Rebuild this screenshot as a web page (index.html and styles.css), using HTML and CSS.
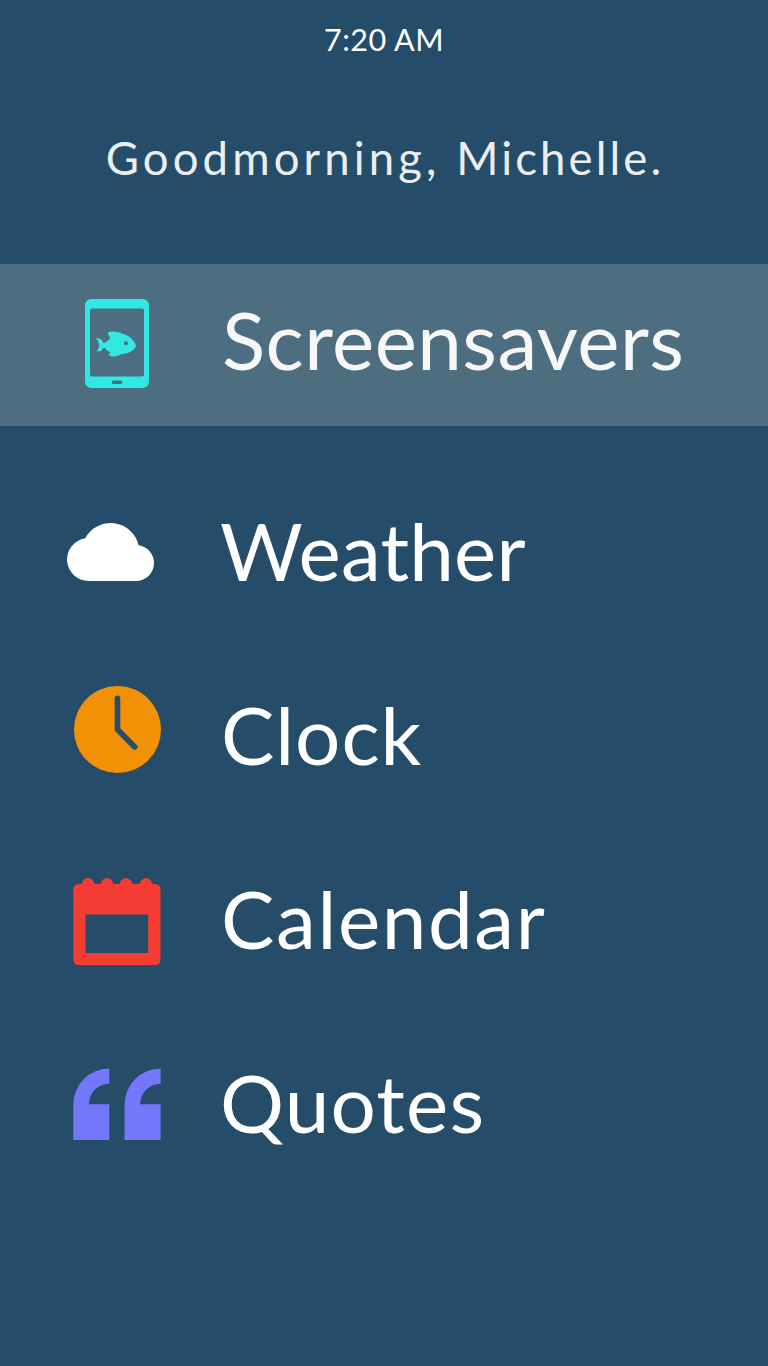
FILE: index.html
```html
<!DOCTYPE html>
<html lang="en">
<head>
<meta charset="utf-8">
<title>Home</title>
<link rel="stylesheet" href="styles.css">
</head>
<body>
<header class="header">
  <div class="time">7:20 AM</div>
  <h1 class="greeting">Goodmorning, <span class="name">Michelle.</span></h1>
</header>
<nav class="menu">
  <a class="item item-active">
    <svg class="icon icon-tablet" width="64" height="89" viewBox="0 0 64 89">
      <path fill="#31e8e3" fill-rule="evenodd" d="M7 0H57Q64 0 64 7V82Q64 89 57 89H7Q0 89 0 82V7Q0 0 7 0ZM7 9.500Q5 9.500 5 11.500V75.500Q5 77.500 7 77.500H57Q59 77.500 59 75.500V11.500Q59 9.500 57 9.500ZM28.500 81.500A1.800 1.800 0 0 0 28.500 85.100H35.500A1.800 1.800 0 0 0 35.500 81.500Z"/>
      <path fill="#31e8e3" fill-rule="evenodd" d="M11 39.500C15 38.500 17.500 41 18.500 44Q20.500 44 25 39.800C24.500 37 23.500 35.500 22.700 34C25 32 32 32 38 35C44 36.500 49.500 41 51 47C49 52.500 42 54.800 36 55.200C32 57.500 27 58.300 24 56.500C23.500 55 24.500 54.300 26 53.500Q21 51.500 19.500 48.500Q18.500 48.800 17.700 50C17 52 14.500 52.800 11.800 52Q14 49.500 14.200 46Q14 42 11 39.500ZM41 42.300A2 2 0 1 0 41 46.300A2 2 0 1 0 41 42.300Z"/>
    </svg>
    <span class="label screensavers">Screensavers</span>
  </a>
  <a class="item">
    <svg class="icon icon-cloud" width="87" height="58" viewBox="0 0 87 58">
      <path fill="#fff" d="M21.500 58A21.500 21.500 0 0 1 18.200 15.260A28.800 28.800 0 0 1 71.600 22.190A18 18 0 0 1 69 58Z"/>
    </svg>
    <span class="label weather">Weather</span>
  </a>
  <a class="item">
    <svg class="icon icon-clock" width="87" height="87" viewBox="0 0 87 87">
      <circle cx="43.500" cy="43.500" r="43.500" fill="#f29105"/>
      <path d="M43.500 12.300V43.500L60.800 61" fill="none" stroke="#254e69" stroke-width="5.600" stroke-linecap="round" stroke-linejoin="round"/>
    </svg>
    <span class="label clock">Clock</span>
  </a>
  <a class="item">
    <svg class="icon icon-calendar" width="88" height="87" viewBox="0 0 88 87">
      <path fill="#f53c34" fill-rule="evenodd" d="M6 6H8.700C9.500 2 12 0 15 0S20.500 2 21.300 6H27.700C28.500 2 31 0 34 0S39.500 2 40.300 6H46.700C47.500 2 50 0 53 0S58.500 2 59.300 6H66.700C67.500 2 70 0 73 0S78.500 2 79.300 6H81.500Q87.500 6 87.500 12V81Q87.500 87 81.500 87H6.300Q.3 87 .3 81V12Q.3 6 6 6ZM12.500 36.500V75H75.200V36.500Z"/>
    </svg>
    <span class="label calendar">Calendar</span>
  </a>
  <a class="item">
    <svg class="icon icon-quotes" width="88" height="72" viewBox="0 0 88 72">
      <path fill="#7577fa" d="M36.300 .5V15.800A20.500 20.500 0 0 0 15.800 36.200H36.300V72H.3V36.500A36 36 0 0 1 36.300 .5ZM87.600 .5V15.800A20.500 20.500 0 0 0 67.100 36.200H87.600V72H51.600V36.500A36 36 0 0 1 87.600 .5Z"/>
    </svg>
    <span class="label quotes">Quotes</span>
  </a>
</nav>
</body>
</html>
```

FILE: styles.css
```css
* { box-sizing: border-box; }
body {
  margin: 0;
  min-height: 1366px;
  background: #254d69;
  color: #fff;
  font-family: Lato, "Open Sans", sans-serif;
}
.header {
  height: 264px;
  padding-top: 21px;
  text-align: center;
}
.time {
  font-size: 30.5px;
  line-height: 36px;
  letter-spacing: 0.5px;
}
.greeting {
  margin: 74px 0 0;
  padding-left: 2px;
  color: #ebedef;
  font-size: 45.5px;
  font-weight: 400;
  line-height: 54px;
  letter-spacing: 4.1px;
}
.name { letter-spacing: 3.1px; }
.item {
  display: grid;
  grid-template-columns: 221px 1fr;
  align-items: center;
  height: 184px;
}
.item-active {
  height: 162px;
  margin-bottom: 32px;
  background: #4d6d81;
}
.icon { display: block; }
.icon-tablet { margin: 0 0 3px 85px; }
.icon-cloud { margin: 4px 0 0 67px; }
.icon-clock { margin: 0 0 9px 74px; }
.icon-calendar { margin: 7px 0 0 73px; }
.icon-quotes { margin: 4px 0 0 73px; }
.label {
  font-size: 80px;
  line-height: 96px;
  white-space: nowrap;
}
.screensavers {
  margin: 0 0 12px 1px;
  color: #f7f7f7;
  letter-spacing: 0.4px;
}
.weather {
  margin-left: -1px;
  letter-spacing: 0.2px;
}
.clock { letter-spacing: 0.9px; }
.calendar { letter-spacing: 1.6px; }
.quotes {
  margin-left: -1px;
  letter-spacing: 1.2px;
}
```
